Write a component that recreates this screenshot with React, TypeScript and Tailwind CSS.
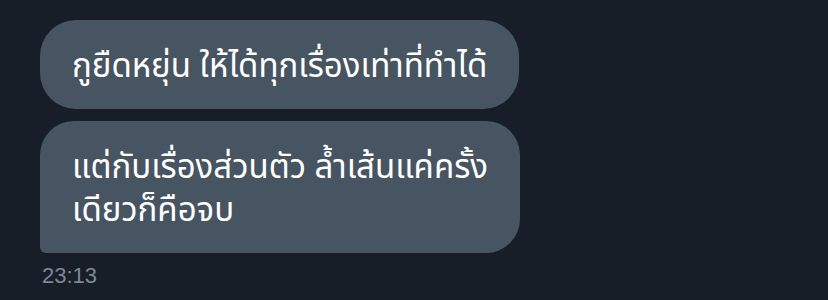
export default function App() {
  return (
    <div className="w-[828px] h-[300px] bg-[#181e28] overflow-hidden pl-10 pt-5">
      <div className="flex flex-col items-start gap-3 font-['Noto_Sans','Noto_Sans_Thai','DejaVu_Sans',sans-serif] text-white text-[33px] leading-[43px]">
        {/* First message */}
        <div className="bg-[#475461] rounded-[36px] px-8 py-[23px]">
          กูยืดหยุ่น ให้ได้ทุกเรื่องเท่าที่ทำได้
        </div>

        {/* Second message */}
        <div className="bg-[#475461] rounded-[34px] rounded-bl-[6px] px-8 py-[23px]">
          แต่กับเรื่องส่วนตัว ล้ำเส้นแค่ครั้ง
          <br />
          เดียวก็คือจบ
        </div>
      </div>
      <div className="mt-[8px] pl-[2px] font-['Liberation_Sans',Arial,sans-serif] text-[22px] leading-[30px] text-[#7f8894]">
        23:13
      </div>
    </div>
  )
}
